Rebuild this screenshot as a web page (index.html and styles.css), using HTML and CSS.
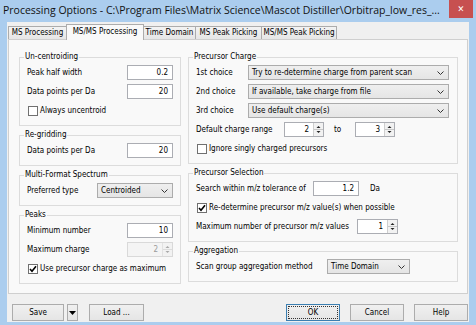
FILE: index.html
```html
<!DOCTYPE html>
<html lang="en">
<head>
    <meta charset="UTF-8">
    <title>Processing Options</title>
    <link rel="stylesheet" href="styles.css">
</head>
<body>

<div class="window">
    <div class="titlebar">
        <span class="title">Processing Options - C:\Program Files\Matrix Science\Mascot Distiller\Orbitrap_low_res_...</span>
        <span class="close">&#x2715;</span>
    </div>

    <div class="frame">
    <div class="client">
        <div class="tabs">
            <div class="tab t1">MS Processing</div>
            <div class="tab t2 active">MS/MS Processing</div>
            <div class="tab t3">Time Domain</div>
            <div class="tab t4">MS Peak Picking</div>
            <div class="tab t5">MS/MS Peak Picking</div>
        </div>

        <div class="panel">
            <div class="col left">
                <fieldset class="group">
                    <legend>Un-centroiding</legend>
                    <div class="row"><span class="label">Peak half width</span><span class="field">0.2</span></div>
                    <div class="row"><span class="label">Data points per Da</span><span class="field">20</span></div>
                    <div class="row"><span class="check"></span><span>Always uncentroid</span></div>
                </fieldset>

                <fieldset class="group">
                    <legend>Re-gridding</legend>
                    <div class="row"><span class="label">Data points per Da</span><span class="field">20</span></div>
                </fieldset>

                <fieldset class="group">
                    <legend>Multi-Format Spectrum</legend>
                    <div class="row">
                        <span class="label">Preferred type</span>
                        <span class="select w76">Centroided<svg class="chev" width="7" height="4" viewBox="0 0 7 4"><path d="M0.5 0.5 L3.5 3.5 L6.5 0.5" fill="none" stroke="#333" stroke-width="1"/></svg></span>
                    </div>
                </fieldset>

                <fieldset class="group">
                    <legend>Peaks</legend>
                    <div class="row"><span class="label">Minimum number</span><span class="field">10</span></div>
                    <div class="row">
                        <span class="label">Maximum charge</span>
                        <span class="field spin disabled"><span class="val">2</span><span class="arrows"><svg width="9" height="13" viewBox="0 0 9 13"><path d="M2.5 5 L6.5 5 L4.5 3 Z M2.5 8 L6.5 8 L4.5 10 Z" fill="#a8a8a8"/><path d="M0 6.5 H9" stroke="#dcdcdc"/></svg></span></span>
                    </div>
                    <div class="row"><span class="check"><svg width="8" height="8" viewBox="0 0 8 8"><path d="M1 4 L3 6.2 L7 1.2" fill="none" stroke="#000" stroke-width="1.6"/></svg></span><span>Use precursor charge as maximum</span></div>
                </fieldset>
            </div>

            <div class="col right">
                <fieldset class="group">
                    <legend>Precursor Charge</legend>
                    <div class="row">
                        <span class="label w52">1st choice</span>
                        <span class="select w201">Try to re-determine charge from parent scan<svg class="chev" width="7" height="4" viewBox="0 0 7 4"><path d="M0.5 0.5 L3.5 3.5 L6.5 0.5" fill="none" stroke="#333" stroke-width="1"/></svg></span>
                    </div>
                    <div class="row">
                        <span class="label w52">2nd choice</span>
                        <span class="select w201">If available, take charge from file<svg class="chev" width="7" height="4" viewBox="0 0 7 4"><path d="M0.5 0.5 L3.5 3.5 L6.5 0.5" fill="none" stroke="#333" stroke-width="1"/></svg></span>
                    </div>
                    <div class="row">
                        <span class="label w52">3rd choice</span>
                        <span class="select w201">Use default charge(s)<svg class="chev" width="7" height="4" viewBox="0 0 7 4"><path d="M0.5 0.5 L3.5 3.5 L6.5 0.5" fill="none" stroke="#333" stroke-width="1"/></svg></span>
                    </div>
                    <div class="row">
                        <span class="label w88">Default charge range</span>
                        <span class="field spin w40"><span class="val">2</span><span class="arrows"><svg width="9" height="13" viewBox="0 0 9 13"><path d="M2.5 5 L6.5 5 L4.5 3 Z M2.5 8 L6.5 8 L4.5 10 Z" fill="#222"/><path d="M0 6.5 H9" stroke="#c8c8c8"/></svg></span></span>
                        <span class="to">to</span>
                        <span class="field spin w40"><span class="val">3</span><span class="arrows"><svg width="9" height="13" viewBox="0 0 9 13"><path d="M2.5 5 L6.5 5 L4.5 3 Z M2.5 8 L6.5 8 L4.5 10 Z" fill="#222"/><path d="M0 6.5 H9" stroke="#c8c8c8"/></svg></span></span>
                    </div>
                    <div class="row"><span class="check"></span><span>Ignore singly charged precursors</span></div>
                </fieldset>

                <fieldset class="group">
                    <legend>Precursor Selection</legend>
                    <div class="row">
                        <span class="label w117">Search within m/z tolerance of</span>
                        <span class="field">1.2</span>
                        <span class="unit">Da</span>
                    </div>
                    <div class="row"><span class="check"><svg width="8" height="8" viewBox="0 0 8 8"><path d="M1 4 L3 6.2 L7 1.2" fill="none" stroke="#000" stroke-width="1.6"/></svg></span><span>Re-determine precursor m/z value(s) when possible</span></div>
                    <div class="row">
                        <span class="label w161">Maximum number of precursor m/z values</span>
                        <span class="field spin w41"><span class="val">1</span><span class="arrows"><svg width="9" height="13" viewBox="0 0 9 13"><path d="M2.5 5 L6.5 5 L4.5 3 Z M2.5 8 L6.5 8 L4.5 10 Z" fill="#222"/><path d="M0 6.5 H9" stroke="#c8c8c8"/></svg></span></span>
                    </div>
                </fieldset>

                <fieldset class="group">
                    <legend>Aggregation</legend>
                    <div class="row">
                        <span class="label w131">Scan group aggregation method</span>
                        <span class="select w83">Time Domain<svg class="chev" width="7" height="4" viewBox="0 0 7 4"><path d="M0.5 0.5 L3.5 3.5 L6.5 0.5" fill="none" stroke="#333" stroke-width="1"/></svg></span>
                    </div>
                </fieldset>
            </div>
        </div>

        <div class="buttons">
            <span class="btn save">Save</span>
            <span class="btn drop"><svg width="7" height="4" viewBox="0 0 7 4"><path d="M0 0 H7 L3.5 4 Z" fill="#000"/></svg></span>
            <span class="btn load">Load ...</span>
            <span class="spacer"></span>
            <span class="btn default">OK</span>
            <span class="btn">Cancel</span>
            <span class="btn">Help</span>
        </div>
    </div>
    </div>
</div>

</body>
</html>
```

FILE: styles.css
```css
body {
    margin: 0;
    width: 476px;
    height: 325px;
    overflow: hidden;
    font-family: 'DejaVu Sans Condensed', 'DejaVu Sans', sans-serif;
    font-stretch: condensed;
    font-size: 8px;
    color: #000;
}

.window {
    width: 476px;
    height: 325px;
    background-color: #abcdee;
    display: flex;
    flex-direction: column;
}

.titlebar {
    height: 22px;
    display: flex;
    align-items: flex-start;
}

.title {
    flex: 1;
    padding-left: 3px;
    line-height: 21px;
    font-family: 'Open Sans', sans-serif;
    font-stretch: normal;
    font-size: 10.5px;
    color: #111;
    white-space: nowrap;
    overflow: hidden;
}

.close {
    width: 24px;
    height: 18px;
    margin-right: 3px;
    background-color: #c75050;
    color: white;
    font-family: 'DejaVu Sans', sans-serif;
    font-size: 9px;
    font-weight: bold;
    display: flex;
    align-items: center;
    justify-content: center;
}

.frame {
    flex: 1;
    padding: 0 7px 3px 7px;
    display: flex;
}

.client {
    flex: 1;
    background-color: #f0f0f0;
    padding: 0 1px 0 1px;
    display: flex;
    flex-direction: column;
}

/* tab strip */
.tabs {
    height: 17px;
    display: flex;
    align-items: flex-end;
}

.tab {
    box-sizing: border-box;
    height: 13px;
    line-height: 12px;
    margin-right: -1px;
    border: 1px solid #acacac;
    border-bottom: none;
    background: linear-gradient(#f3f3f3, #e6e6e6);
    text-align: center;
    white-space: nowrap;
}

.tab.active {
    height: 16px;
    line-height: 14px;
    margin-bottom: -1px;
    background: #f9f9f9;
    position: relative;
    z-index: 1;
}

.t1 { width: 59px; }
.t2 { width: 78px; }
.t3 { width: 53px; }
.t4 { width: 67px; }
.t5 { width: 76px; }

.panel {
    height: 255px;
    box-sizing: border-box;
    border: 1px solid #cfcfcf;
    background-color: #f9f9f9;
    padding: 11px 8px 0 10px;
    display: flex;
    gap: 7px;
}

.col {
    display: flex;
    flex-direction: column;
    gap: 3px;
}

.col.left { width: 162px; }
.col.right { width: 270px; }

.group {
    margin: 0;
    min-width: 0;
    box-sizing: border-box;
    border: 1px solid #dcdcdc;
    padding: 0 7px 5px 7px;
}

.group legend {
    padding: 0 1px;
    margin-left: -3px;
    line-height: 12px;
}

.row {
    height: 19px;
    display: flex;
    align-items: center;
    white-space: nowrap;
}

.label {
    flex: 1;
}

.col.right .label {
    flex: none;
}

.w52 { width: 52px; }
.w88 { width: 88px; }
.w117 { width: 117px; }
.w131 { width: 131px; }
.w161 { width: 161px; }

.field {
    box-sizing: border-box;
    width: 46px;
    height: 15px;
    border: 1px solid #abadb3;
    background-color: white;
    padding-right: 4px;
    display: flex;
    align-items: center;
    justify-content: flex-end;
}

.field.spin {
    padding-right: 0;
}

.field.w40 { width: 40px; }
.field.w41 { width: 41px; }

.spin .val {
    flex: 1;
    text-align: right;
    padding-right: 4px;
}

.spin .arrows {
    width: 10px;
    height: 13px;
    box-sizing: border-box;
    border-left: 1px solid #cfcfcf;
    background-color: #f2f2f2;
    display: flex;
}

.field.disabled {
    background-color: #f4f4f4;
    border-color: #d9d9d9;
    color: #9a9a9a;
}

.field.disabled .arrows {
    border-left-color: #e2e2e2;
}

.select {
    box-sizing: border-box;
    height: 15px;
    border: 1px solid #acacac;
    background: linear-gradient(#efefef, #e5e5e5);
    padding: 0 4px 0 3px;
    display: flex;
    align-items: center;
    justify-content: space-between;
}

.select.w76 { width: 76px; }
.select.w83 { width: 83px; }
.select.w201 { width: 201px; }

.to {
    width: 21px;
    margin-left: 10px;
}

.unit {
    margin-left: 11px;
}

.check {
    box-sizing: border-box;
    width: 10px;
    height: 10px;
    margin: 0 2px 0 1px;
    border: 1px solid #707070;
    background-color: white;
    display: flex;
    align-items: center;
    justify-content: center;
}

/* bottom buttons */
.buttons {
    margin-top: 10px;
    padding-left: 4px;
    display: flex;
}

.btn {
    box-sizing: border-box;
    width: 54px;
    height: 17px;
    margin-left: 10px;
    border: 1px solid #acacac;
    background: linear-gradient(#f0f0f0, #e5e5e5);
    display: flex;
    align-items: center;
    justify-content: center;
}

.btn.save {
    width: 52px;
    margin-left: 0;
}

.btn.drop {
    width: 11px;
    margin-left: 3px;
}

.btn.load {
    width: 55px;
    margin-left: 11px;
}

.btn.default {
    border-color: #3c7fb1;
    outline: 1px dotted #333;
    outline-offset: -3px;
}

.spacer {
    flex: 1;
}
```
